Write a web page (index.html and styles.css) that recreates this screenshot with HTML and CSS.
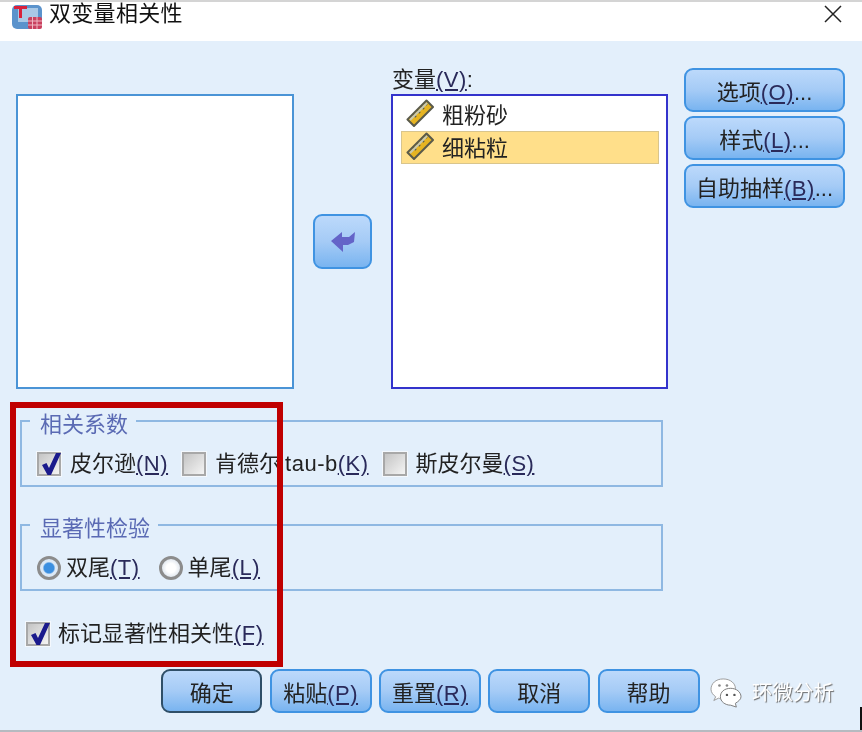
FILE: index.html
```html
<!DOCTYPE html>
<html lang="zh-CN">
<head>
    <meta charset="UTF-8">
    <meta name="viewport" content="width=device-width, initial-scale=1.0">
    <title>双变量相关性</title>
    <link rel="stylesheet" href="styles.css">
</head>
<body>
    <svg class="defs" width="0" height="0">
        <defs>
            <symbol id="ruler" viewBox="0 0 28 28">
                <path d="M1.5 20.5 L20.5 1.5 L27 8 L8 27 Z" fill="#e6b422" stroke="#5a5a4a" stroke-width="2" stroke-linejoin="round"/>
                <path d="M7 15 L10 18 M11 11 L14 14 M15 7 L18 10 M19 4 L21 6" stroke="#5c5a40" stroke-width="2"/>
                <path d="M4 21 L21 4" stroke="#c9c9b0" stroke-width="2"/>
            </symbol>
            <symbol id="tick" viewBox="0 0 24 24">
                <path d="M4 12 L8.5 10 L11 15 L18 0 L23 0 L13 22 L9.5 22 Z" fill="#1a1a8c"/>
            </symbol>
        </defs>
    </svg>

    <div class="dialog">
        <header class="titlebar">
            <svg class="app-icon" width="30" height="24" viewBox="0 0 30 24">
                <rect x="0" y="0" width="30" height="24" rx="5" fill="#5b93cc"/>
                <rect x="6" y="3" width="20" height="14" fill="#a9c8e6"/>
                <path d="M2 1 H15 V4 H10 V13 H7 V4 H2 Z" fill="#d8213c"/>
                <rect x="16" y="12" width="14" height="12" rx="2" fill="#c9405e"/>
                <path d="M16 16 H30 M16 20 H30 M20.5 12 V24 M25 12 V24" stroke="#eeb6c2" stroke-width="1"/>
            </svg>
            <span class="title">双变量相关性</span>
            <svg class="close" width="18" height="18" viewBox="0 0 18 18">
                <path d="M1 1 L17 17 M17 1 L1 17" stroke="#222" stroke-width="1.5"/>
            </svg>
        </header>

        <main class="content">
            <div class="lists">
                <div class="listbox source"></div>
                <button class="btn arrow-btn" type="button">
                    <svg width="26" height="24" viewBox="0 0 26 24">
                        <path d="M1 11 L12 2 L12 7 L19 7 L25 2 L24 12 L18 15 L13 15 L13 22 Z" fill="#6464c8"/>
                    </svg>
                </button>
                <div class="target">
                    <div class="target-label">变量<u>(V)</u>:</div>
                    <div class="listbox target-list">
                        <div class="var-row"><svg class="ruler" width="28" height="28"><use href="#ruler"/></svg>粗粉砂</div>
                        <div class="var-row selected"><svg class="ruler" width="28" height="28"><use href="#ruler"/></svg>细粘粒</div>
                    </div>
                </div>
                <div class="side-btns">
                    <button class="btn" type="button">选项<u>(O)</u>...</button>
                    <button class="btn" type="button">样式<u>(L)</u>...</button>
                    <button class="btn" type="button">自助抽样<u>(B)</u>...</button>
                </div>
            </div>

            <fieldset class="group corr">
                <legend>相关系数</legend>
                <div class="opts">
                    <label class="opt"><span class="check"><svg width="24" height="24"><use href="#tick"/></svg></span>皮尔逊<u>(N)</u></label>
                    <label class="opt"><span class="check"></span>肯德尔<span class="latin">tau-b</span><u>(K)</u></label>
                    <label class="opt"><span class="check"></span>斯皮尔曼<u>(S)</u></label>
                </div>
            </fieldset>

            <fieldset class="group sig">
                <legend>显著性检验</legend>
                <div class="opts">
                    <label class="opt"><span class="radio on"></span>双尾<u>(T)</u></label>
                    <label class="opt"><span class="radio"></span>单尾<u>(L)</u></label>
                </div>
            </fieldset>

            <label class="opt flag"><span class="check"><svg width="24" height="24"><use href="#tick"/></svg></span>标记显著性相关性<u>(F)</u></label>

            <div class="footer">
                <button class="btn default" type="button">确定</button>
                <button class="btn" type="button">粘贴<u>(P)</u></button>
                <button class="btn" type="button">重置<u>(R)</u></button>
                <button class="btn" type="button">取消</button>
                <button class="btn" type="button">帮助</button>
                <div class="watermark">
                    <svg width="32" height="30" viewBox="0 0 34 32">
                        <path d="M14 1 C6 1 1 6 1 12 C1 15 3 18 6 20 L4 24 L9 21.5 C10 22 12 22 14 22 C22 22 27 17 27 11 C27 6 22 1 14 1 Z" fill="#fff" stroke="#999" stroke-width="1"/>
                        <path d="M22 11 C15 11 11 15 11 20 C11 25 16 29 22 29 L28 31 L27 27 C30 25 33 23 33 20 C33 15 28 11 22 11 Z" fill="#fff" stroke="#777" stroke-width="1"/>
                        <circle cx="10" cy="8" r="1.4" fill="#888"/>
                        <circle cx="18" cy="8" r="1.4" fill="#888"/>
                        <circle cx="18" cy="18" r="1.3" fill="#555"/>
                        <circle cx="26" cy="18" r="1.3" fill="#555"/>
                    </svg>
                    <span>环微分析</span>
                </div>
            </div>
        </main>

        <div class="highlight"></div>
        <div class="corner-mark"></div>
    </div>
</body>
</html>
```

FILE: styles.css
```css
* {
    box-sizing: border-box;
}
body {
    margin: 0;
    font-family: "Liberation Sans", "Noto Sans CJK SC", sans-serif;
    font-size: 22px;
    line-height: 26px;
    color: #222;
    background-color: #e3effb;
}
.defs {
    position: absolute;
}
u {
    color: #2a2a5a;
    letter-spacing: 0.5px;
}
.latin {
    margin-left: 4px;
    letter-spacing: 0.5px;
}
.dialog {
    position: relative;
    width: 862px;
    height: 732px;
    overflow: hidden;
    display: flex;
    flex-direction: column;
    border-bottom: 2px solid #b5bac0;
}
.titlebar {
    height: 41px;
    flex-shrink: 0;
    display: flex;
    align-items: flex-start;
    padding: 2px 20px 0 12px;
    background-color: #fff;
    border-top: 2px solid #d4d4d4;
    filter: blur(0.4px);
}
.app-icon {
    margin-right: 7px;
    margin-top: 1px;
}
.title {
    line-height: 20px;
    letter-spacing: 0.3px;
    color: #111;
}
.close {
    margin-left: auto;
    margin-top: 1px;
}
.content {
    flex: 1;
    padding-top: 27px;
    filter: blur(0.4px);
}
.lists {
    display: flex;
    align-items: flex-start;
    padding-left: 16px;
    height: 321px;
    margin-bottom: 16px;
}
.listbox {
    background-color: #fff;
    height: 295px;
}
.source {
    width: 278px;
    margin-top: 26px;
    border: 2px solid #4a94d6;
}
.target {
    width: 277px;
    margin-left: 19px;
}
.target-label {
    height: 26px;
    margin-left: 1px;
    line-height: 24px;
}
.target-list {
    padding: 2px 7px 0 8px;
    border: 2px solid #3333cc;
}
.var-row {
    display: flex;
    align-items: center;
    gap: 8px;
    height: 33px;
    padding-top: 2px;
    padding-left: 4px;
    border: 1px solid transparent;
}
.ruler {
    margin-top: -6px;
}
.var-row.selected {
    background-color: #ffdf8a;
    border-color: #d9c58c;
}
.btn {
    display: block;
    width: 161px;
    height: 44px;
    padding: 5px 0 0;
    font: inherit;
    color: #222;
    border: 2px solid #3f93e2;
    border-radius: 9px;
    background: linear-gradient(#bcd9fb, #a5cbf6 50%, #79b4f0);
}
.btn.default {
    border-color: #2f4f68;
}
.arrow-btn {
    width: 59px;
    height: 55px;
    margin: 146px 0 0 19px;
    padding: 0;
    display: flex;
    align-items: center;
    justify-content: center;
}
.side-btns {
    margin-left: 16px;
    display: flex;
    flex-direction: column;
    gap: 4px;
}
.group {
    width: 643px;
    height: 82px;
    margin: 0 0 22px 20px;
    padding: 14px 0 0 15px;
    border: 2px solid #8fb8e2;
    min-width: 0;
}
.group legend {
    margin-left: -7px;
    padding: 8px 8px 0 10px;
    line-height: 24px;
    color: #5a6ab4;
}
.opts {
    display: flex;
    gap: 14px;
}
.opt {
    display: flex;
    align-items: center;
    height: 26px;
    white-space: nowrap;
}
.check {
    width: 24px;
    height: 24px;
    margin-right: 9px;
    border: 2px solid #a8a8a8;
    background: linear-gradient(135deg, #c4c4c4, #f4f4f4);
    box-shadow: 0 0 0 1px #f4f8fd;
    position: relative;
}
.check svg {
    position: absolute;
    left: -1px;
    top: -1px;
}
.radio {
    width: 24px;
    height: 24px;
    margin-right: 5px;
    border-radius: 50%;
    border: 3px solid #8c8c8c;
    background: radial-gradient(circle, #fff 35%, #dfe6ee 75%);
}
.radio.on {
    background: radial-gradient(circle, #3c8fe0 38%, #dbe8f6 50%);
}
.sig {
    margin-bottom: 0;
}
.sig .opts {
    gap: 19px;
}
.flag {
    margin: 30px 0 0 26px;
}
.flag .check {
    margin-right: 8px;
}
.footer {
    display: flex;
    align-items: center;
    gap: 7.33px;
    padding-left: 161px;
    margin-top: 22px;
}
.footer .btn {
    width: 102px;
}
.footer .default {
    width: 101.3px;
}
.watermark {
    display: flex;
    align-items: center;
    gap: 10px;
    margin: 4px 0 0 3px;
    font-size: 20.5px;
    color: #fff;
    text-shadow: 1px 1px 1px #6a6a6a;
}
.highlight {
    position: absolute;
    left: 10px;
    top: 402px;
    width: 273px;
    height: 265px;
    border: 6px solid #c00000;
}
.corner-mark {
    position: absolute;
    right: 0;
    top: 707px;
    width: 2px;
    height: 25px;
    background-color: #111;
}
```
